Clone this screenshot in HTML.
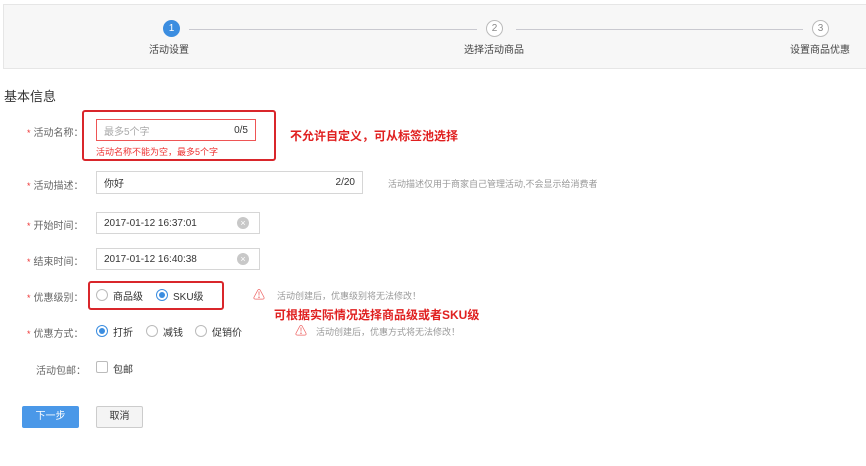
<!DOCTYPE html>
<html><head><meta charset="utf-8"><style>
*{box-sizing:border-box;margin:0;padding:0}
body{width:866px;height:466px;background:#fff;font-family:"Liberation Sans","Noto Sans CJK SC",sans-serif;position:relative;overflow:hidden;color:#333}
.a{position:absolute;white-space:nowrap}
.steps{left:3px;top:4px;width:870px;height:65px;background:#f7f7f7;border:1px solid #e6e6e6}
.c{width:17px;height:17px;border-radius:50%;border:1px solid #bbb;font-size:10px;line-height:15px;text-align:center;color:#888;background:#fff}
.ln{height:1px;background:#c9c9d0}
.sl{font-size:10px;color:#444}
.lab{font-size:10px;color:#666}
.lab b{color:#e33;font-weight:normal;font-size:9px;margin-right:3px}
.in{border:1px solid #d6d6d6;background:#fff;font-size:10px;color:#333;padding:0 7px;display:flex;align-items:center}
.in span{margin-left:auto}
.rb{width:12px;height:12px;border-radius:50%;border:1px solid #bbb;background:#fff}
.rb.on{border-color:#3b8de0}
.rb.on::after{content:"";position:absolute;left:2px;top:2px;width:6px;height:6px;border-radius:50%;background:#3b8de0}
.t{font-size:10px;color:#333}
.red{color:#e02020;font-weight:bold;font-size:12px}
.hint{font-size:9px;color:#999}
.x{width:12px;height:12px;border-radius:50%;background:#c8c8c8;color:#fff;font-size:9px;line-height:12px;text-align:center}
</style></head><body>
<div class="a steps"></div>
<div class="a c" style="left:163px;top:20px;background:#3b8de0;border-color:#3b8de0;color:#fff">1</div>
<div class="a ln" style="left:189px;top:29px;width:288px"></div>
<div class="a c" style="left:486px;top:20px">2</div>
<div class="a ln" style="left:516px;top:29px;width:287px"></div>
<div class="a c" style="left:812px;top:20px">3</div>
<div class="a sl" style="left:149px;top:41px">活动设置</div>
<div class="a sl" style="left:464px;top:41px">选择活动商品</div>
<div class="a sl" style="left:790px;top:41px">设置商品优惠</div>
<div class="a" style="left:4px;top:86px;font-size:13px;color:#333">基本信息</div>

<div class="a" style="left:82px;top:110px;width:194px;height:51px;border:2px solid #d9262b;border-radius:3px"></div>
<div class="a lab" style="left:27px;top:124px"><b>*</b>活动名称：</div>
<div class="a in" style="left:96px;top:119px;width:160px;height:22px;border-color:#e55;color:#aaa">最多5个字<span style="color:#333">0/5</span></div>
<div class="a" style="left:96px;top:145px;font-size:9px;color:#e33">活动名称不能为空，最多5个字</div>
<div class="a red" style="left:290px;top:127px">不允许自定义，可从标签池选择</div>

<div class="a lab" style="left:27px;top:177px"><b>*</b>活动描述：</div>
<div class="a in" style="left:96px;top:171px;width:267px;height:23px">你好<span>2/20</span></div>
<div class="a hint" style="left:388px;top:177px">活动描述仅用于商家自己管理活动,不会显示给消费者</div>

<div class="a lab" style="left:27px;top:217px"><b>*</b>开始时间：</div>
<div class="a in" style="left:96px;top:212px;width:164px;height:22px">2017-01-12 16:37:01</div>
<div class="a x" style="left:237px;top:217px">×</div>
<div class="a lab" style="left:27px;top:253px"><b>*</b>结束时间：</div>
<div class="a in" style="left:96px;top:248px;width:164px;height:22px">2017-01-12 16:40:38</div>
<div class="a x" style="left:237px;top:253px">×</div>

<div class="a" style="left:88px;top:281px;width:136px;height:29px;border:2px solid #d9262b;border-radius:3px"></div>
<div class="a lab" style="left:27px;top:289px"><b>*</b>优惠级别：</div>
<div class="a rb" style="left:96px;top:289px"></div><div class="a t" style="left:113px;top:288px">商品级</div>
<div class="a rb on" style="left:156px;top:289px"></div><div class="a t" style="left:173px;top:288px">SKU级</div>
<div class="a" style="left:253px;top:286px;font-size:12px;color:#e66">⚠</div>
<div class="a hint" style="left:277px;top:289px">活动创建后，优惠级别将无法修改！</div>
<div class="a red" style="left:274px;top:306px">可根据实际情况选择商品级或者SKU级</div>

<div class="a lab" style="left:27px;top:325px"><b>*</b>优惠方式：</div>
<div class="a rb on" style="left:96px;top:325px"></div><div class="a t" style="left:113px;top:324px">打折</div>
<div class="a rb" style="left:146px;top:325px"></div><div class="a t" style="left:163px;top:324px">减钱</div>
<div class="a rb" style="left:195px;top:325px"></div><div class="a t" style="left:212px;top:324px">促销价</div>
<div class="a" style="left:295px;top:322px;font-size:12px;color:#e66">⚠</div>
<div class="a hint" style="left:316px;top:325px">活动创建后，优惠方式将无法修改！</div>

<div class="a lab" style="left:36px;top:362px">活动包邮：</div>
<div class="a" style="left:96px;top:361px;width:12px;height:12px;border:1px solid #bbb;border-radius:2px"></div>
<div class="a t" style="left:113px;top:361px">包邮</div>

<div class="a" style="left:22px;top:406px;width:57px;height:22px;background:#4a98e8;border-radius:2px;color:#fff;font-size:10px;line-height:22px;text-align:center">下一步</div>
<div class="a" style="left:96px;top:406px;width:47px;height:22px;background:#f4f4f4;border:1px solid #ccc;border-radius:2px;font-size:10px;line-height:20px;text-align:center;color:#333">取消</div>
</body></html>
